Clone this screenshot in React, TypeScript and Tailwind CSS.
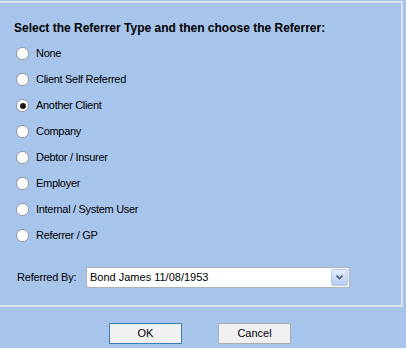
import React from 'react';

const options = [
  'None',
  'Client Self Referred',
  'Another Client',
  'Company',
  'Debtor / Insurer',
  'Employer',
  'Internal / System User',
  'Referrer / GP',
];

const Radio = ({ checked }: { checked: boolean }) => (
  <span className="w-[13px] h-[13px] rounded-full border border-[#8e8f8f] bg-gradient-to-br from-[#d4d4d4] to-white flex items-center justify-center shrink-0">
    <span className="w-[11px] h-[11px] rounded-full bg-white flex items-center justify-center">
      {checked && <span className="w-[6px] h-[6px] rounded-full bg-[#1a1a1a]" />}
    </span>
  </span>
);

export default function App() {
  const selected = 'Another Client';

  return (
    <div
      className="w-[406px] h-[348px] bg-[#a7c4eb] overflow-hidden text-[11px] text-black"
      style={{ fontFamily: '"Liberation Sans", Arial, sans-serif' }}
    >
      <div className="h-[306px] mt-[1px] mr-[3px] -ml-[2px] border-t-2 border-r-2 border-b-2 border-[#dde3ea]">
        <div className="pl-[16px] pt-[16px] font-bold text-[12px]">
          Select the Referrer Type and then choose the Referrer:
        </div>
        <div className="flex flex-col gap-[13px] pt-[10px] pl-[18px]">
          {options.map((opt) => (
            <label key={opt} className="flex items-center gap-[7px] h-[13px]">
              <Radio checked={opt === selected} />
              <span className="tracking-[-0.3px]">{opt}</span>
            </label>
          ))}
        </div>
        <div className="flex items-center pl-[19px] pt-[25px]">
          <span className="w-[69px] tracking-[-0.2px]">Referred By:</span>
          <div className="w-[264px] h-[21px] border border-[#a9b3bf] bg-white flex items-center">
            <span className="flex-1 pl-[3px] text-[11px]">Bond James 11/08/1953</span>
            <span className="w-[17px] h-[17px] mr-[1px] rounded-[2px] bg-gradient-to-b from-[#e4edfb] to-[#b5cdf2] border border-[#b6c9e6] flex items-center justify-center">
              <svg width="7" height="5" viewBox="0 0 7 5">
                <path d="M0.5 0.5 L3.5 3.5 L6.5 0.5" fill="none" stroke="#4d6185" strokeWidth="1.6" />
              </svg>
            </span>
          </div>
        </div>
      </div>
      <div className="flex pt-[16px] pl-[109px] gap-[36px]">
        <button className="w-[73px] h-[21px] border border-[#3c7fb1] bg-[#f0eff2] text-[11px]">OK</button>
        <button className="w-[73px] h-[21px] border border-[#acacac] bg-[#f0eff2] text-[11px]">Cancel</button>
      </div>
    </div>
  );
}
